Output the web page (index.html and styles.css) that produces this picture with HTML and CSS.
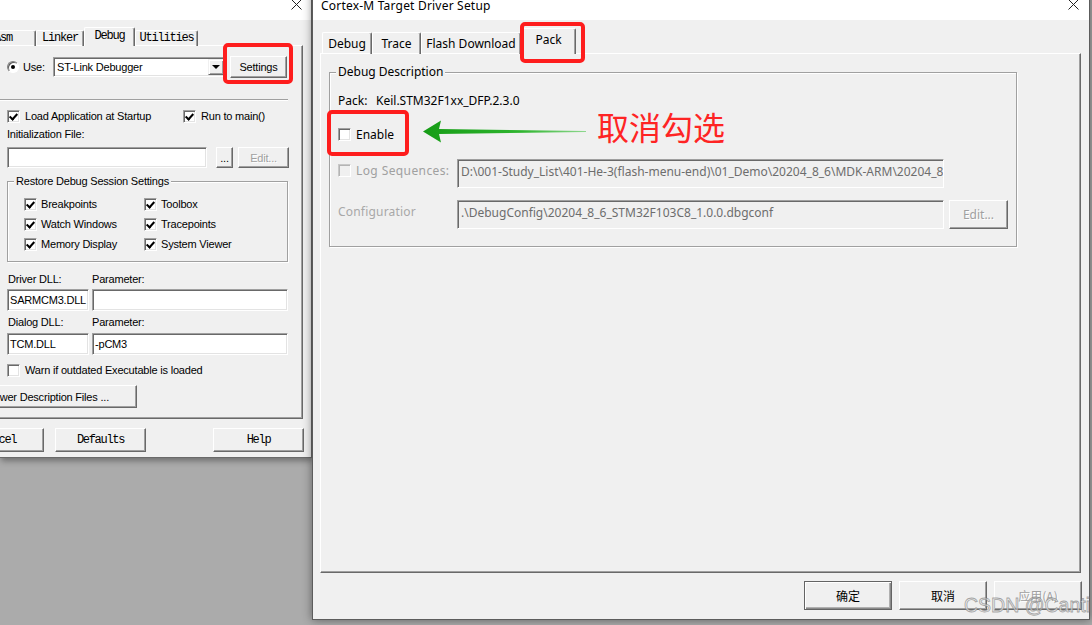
FILE: index.html
```html
<!DOCTYPE html>
<html lang="zh-CN">
<head>
<meta charset="utf-8">
<title>Cortex-M Target Driver Setup</title>
<link rel="stylesheet" href="styles.css">
</head>
<body>
<div class="desktop">

  <section class="win win-left">
    <header class="titlebar">
      <svg class="xicon" width="11" height="11" viewBox="0 0 11 11"><path d="M0.5 0.5L10.5 10.5M10.5 0.5L0.5 10.5" stroke="#222" stroke-width="1" fill="none"/></svg>
    </header>
    <div class="lbody">
      <nav class="ltabs">
        <span class="ltab lt-asm">Asm</span>
        <span class="ltab lt-linker">Linker</span>
        <span class="ltab lt-debug active">Debug</span>
        <span class="ltab lt-util">Utilities</span>
      </nav>
      <div class="lpanel">
        <div class="use-row">
          <span class="radio"></span>
          <span class="use-lbl">Use:</span>
          <div class="select">
            <span class="select-val">ST-Link Debugger</span>
            <span class="select-arrow"><i class="tri"></i></span>
          </div>
          <button class="btn settings-btn">Settings</button>
        </div>
        <div class="sep"></div>
        <div class="opt-row">
          <label class="chk"><span class="cb on"></span>Load Application at Startup</label>
          <label class="chk"><span class="cb on"></span>Run to main()</label>
        </div>
        <div class="lab init-lbl">Initialization File:</div>
        <div class="init-row">
          <span class="field init-field"></span>
          <button class="btn dots-btn">...</button>
          <button class="btn edit-btn disabled">Edit...</button>
        </div>
        <div class="group restore">
          <span class="legend">Restore Debug Session Settings</span>
          <div class="restore-grid">
            <label class="chk"><span class="cb on"></span>Breakpoints</label>
            <label class="chk"><span class="cb on"></span>Toolbox</label>
            <label class="chk"><span class="cb on"></span>Watch Windows</label>
            <label class="chk"><span class="cb on"></span>Tracepoints</label>
            <label class="chk"><span class="cb on"></span>Memory Display</label>
            <label class="chk"><span class="cb on"></span>System Viewer</label>
          </div>
        </div>
        <div class="dll-labels first"><span>Driver DLL:</span><span>Parameter:</span></div>
        <div class="dll-fields"><span class="field">SARMCM3.DLL</span><span class="field"></span></div>
        <div class="dll-labels"><span>Dialog DLL:</span><span>Parameter:</span></div>
        <div class="dll-fields"><span class="field">TCM.DLL</span><span class="field">-pCM3</span></div>
        <label class="chk warn-row"><span class="cb"></span>Warn if outdated Executable is loaded</label>
        <button class="btn manage-btn">Manage Component Viewer Description Files ...</button>
      </div>
      <div class="lbuttons">
        <button class="btn mono-btn cancel-btn">Cancel</button>
        <button class="btn mono-btn defaults-btn">Defaults</button>
        <button class="btn mono-btn help-btn">Help</button>
      </div>
    </div>
  </section>

  <section class="win win-right">
    <header class="titlebar rtitle">
      <span class="title-text">Cortex-M Target Driver Setup</span>
      <svg class="xicon" width="11" height="11" viewBox="0 0 11 11"><path d="M0.5 0.5L10.5 10.5M10.5 0.5L0.5 10.5" stroke="#222" stroke-width="1" fill="none"/></svg>
    </header>
    <div class="rbody">
      <nav class="rtabs">
        <span class="rtab rt-debug">Debug</span>
        <span class="rtab rt-trace">Trace</span>
        <span class="rtab rt-flash">Flash Download</span>
        <span class="rtab rt-pack active">Pack</span>
      </nav>
      <div class="rpanel">
        <div class="group rgroup">
          <span class="legend rlegend">Debug Description</span>
          <div class="pack-row"><span class="pack-key">Pack:</span><span>Keil.STM32F1xx_DFP.2.3.0</span></div>
          <label class="chk rchk enable-row"><span class="cb"></span>Enable</label>
          <div class="form-row log-row">
            <label class="chk rchk dis form-lbl"><span class="cb dis"></span>Log Sequences:</label>
            <span class="field rfield">D:\001-Study_List\401-He-3(flash-menu-end)\01_Demo\20204_8_6\MDK-ARM\20204_8_6</span>
          </div>
          <div class="form-row cfg-row">
            <span class="form-lbl dis-text">Configuratior</span>
            <span class="field rfield">.\DebugConfig\20204_8_6_STM32F103C8_1.0.0.dbgconf</span>
            <button class="btn redit-btn disabled">Edit...</button>
          </div>
        </div>
      </div>
      <div class="rbuttons">
        <button class="btn rbtn default">确定</button>
        <button class="btn rbtn">取消</button>
        <button class="btn rbtn disabled">应用(A)</button>
      </div>
    </div>
  </section>

  <div class="hl hl-settings"></div>
  <div class="hl hl-pack"></div>
  <div class="hl hl-enable"></div>
  <svg class="arrow" width="164" height="24" viewBox="0 0 164 24">
    <defs>
      <linearGradient id="ag" x1="0" y1="0" x2="1" y2="0">
        <stop offset="0" stop-color="#169c16"/>
        <stop offset="0.6" stop-color="#2fb52f"/>
        <stop offset="1" stop-color="#8fd88f"/>
      </linearGradient>
    </defs>
    <polygon points="0,11.5 18,0.5 16,9 163,11 163,12 16,14 18,22.5" fill="url(#ag)"/>
  </svg>
  <div class="note">取消勾选</div>
  <div class="watermark">CSDN @Canti</div>
</div>
</body>
</html>
```

FILE: styles.css
```css
* { box-sizing: border-box; }
html, body { margin: 0; padding: 0; }
body {
  width: 1092px;
  height: 625px;
  overflow: hidden;
  background: #ababab;
  font-family: "Liberation Sans", Arial, sans-serif;
}
.desktop { position: relative; width: 1092px; height: 625px; overflow: hidden; }

/* windows */
.win {
  position: absolute;
  top: -10px;
  background: #f0f0f0;
  display: flex;
  flex-direction: column;
  color: #000;
}
.win-left {
  left: 0;
  width: 312px;
  height: 468px;
  border-right: 1px solid #6a6a6a;
  border-bottom: 1px solid #6a6a6a;
  box-shadow: 1px 3px 6px rgba(0,0,0,0.35);
  font: 11px "Liberation Sans", Arial, sans-serif;
  letter-spacing: -0.2px;
}
.win-right {
  left: 312px;
  width: 778px;
  height: 630px;
  border: 1px solid #5c5c5c;
  border-top: none;
  box-shadow: 0 0 9px rgba(0,0,0,0.45);
  font: 12px "Noto Sans", "Noto Sans CJK SC", sans-serif;
  z-index: 2;
}
.titlebar {
  flex: none;
  height: 30px;
  background: #fff;
  display: flex;
  align-items: center;
  padding-top: 1px;
}
.titlebar .xicon { margin-left: auto; margin-right: 9px; margin-top: -2px; }
.rtitle .xicon { margin-right: 10px; }
.title-text { margin-left: 8px; font-size: 12px; color: #000; letter-spacing: 0.2px; }

button { font: inherit; letter-spacing: inherit; color: #000; padding: 0; }

/* classic 3D pieces */
.btn {
  background: #f0f0f0;
  border: 1px solid;
  border-color: #fff #696969 #696969 #fff;
  box-shadow: inset -1px -1px 0 #a0a0a0;
  display: flex;
  align-items: center;
  justify-content: center;
  white-space: nowrap;
}
.btn.disabled { color: #a0a0a0; text-shadow: 1px 1px 0 #fff; }
.field {
  background: #fff;
  border: 1px solid;
  border-color: #a0a0a0 #fff #fff #a0a0a0;
  box-shadow: inset 1px 1px 0 #696969, inset -1px -1px 0 #e3e3e3;
  display: flex;
  align-items: center;
  padding-left: 2px;
  white-space: nowrap;
  overflow: hidden;
}
.cb {
  position: relative;
  flex: none;
  width: 13px;
  height: 13px;
  background: #fff;
  border: 1px solid;
  border-color: #a0a0a0 #fff #fff #a0a0a0;
  box-shadow: inset 1px 1px 0 #696969, inset -1px -1px 0 #e3e3e3;
  margin-right: 5px;
}
.cb.on::after {
  content: "";
  position: absolute;
  left: 3px;
  top: 1px;
  width: 3px;
  height: 6px;
  border-right: 2px solid #000;
  border-bottom: 2px solid #000;
  transform: rotate(42deg);
}
.cb.dis { background: #f0f0f0; border-color: #c8c8c8 #fff #fff #c8c8c8; box-shadow: inset 1px 1px 0 #b4b4b4; }
.chk { display: flex; align-items: center; height: 14px; white-space: nowrap; }
.radio {
  position: relative;
  flex: none;
  width: 12px;
  height: 12px;
  border-radius: 50%;
  background: #fff;
  border: 1px solid;
  border-color: #808080 #fff #fff #808080;
  box-shadow: inset 1px 1px 0 #5a5a5a;
}
.radio::after {
  content: "";
  position: absolute;
  left: 3px;
  top: 3px;
  width: 4px;
  height: 4px;
  border-radius: 50%;
  background: #000;
}
.group {
  position: relative;
  border: 1px solid #a0a0a0;
  box-shadow: inset 1px 1px 0 #fff, 1px 1px 0 #fff;
}
.legend {
  position: absolute;
  top: -8px;
  left: 7px;
  padding: 0 2px;
  background: #f0f0f0;
  line-height: 14px;
  white-space: nowrap;
}

/* left window */
.lbody { flex: 1; display: flex; flex-direction: column; padding-top: 7px; }
.ltabs {
  display: flex;
  align-items: flex-end;
  height: 19px;
  margin-bottom: -1px;
  position: relative;
  z-index: 1;
  font: 12px "Liberation Mono", "Courier New", monospace;
  letter-spacing: -1.2px;
}
.ltab {
  height: 16px;
  border: 1px solid;
  border-color: #fff #696969 transparent #fff;
  border-bottom: none;
  border-radius: 2px 2px 0 0;
  box-shadow: inset -1px 0 0 #a0a0a0;
  display: flex;
  align-items: center;
  justify-content: center;
  padding-bottom: 1px;
}
.ltab.active { height: 19px; background: #f0f0f0; padding-bottom: 3px; }
.lt-asm { margin-left: -30px; width: 66px; }
.lt-linker { width: 48px; }
.lt-debug { width: 51px; }
.lt-util { width: 63px; }

.lpanel {
  flex: none;
  height: 374px;
  width: 307px;
  margin-left: -4px;
  border: 1px solid;
  border-color: #fff #696969 #696969 #fff;
  box-shadow: inset -1px -1px 0 #a0a0a0;
  padding: 10px 0 0 10px;
  display: flex;
  flex-direction: column;
}
.use-row { display: flex; align-items: center; height: 22px; }
.use-lbl { width: 34px; padding-left: 4px; }
.select {
  width: 173px;
  height: 20px;
  display: flex;
  align-items: center;
  background: #fff;
  border: 1px solid;
  border-color: #a0a0a0 #fff #fff #a0a0a0;
  box-shadow: inset 1px 1px 0 #696969, inset -1px -1px 0 #e3e3e3;
  padding: 0 1px 0 3px;
}
.select-val { flex: 1; white-space: nowrap; }
.select-arrow {
  width: 16px;
  height: 16px;
  background: #f0f0f0;
  border: 1px solid;
  border-color: #f0f0f0 #696969 #696969 #f0f0f0;
  box-shadow: inset 1px 1px 0 #fff, inset -1px -1px 0 #a0a0a0;
  display: flex;
  align-items: center;
  justify-content: center;
}
.tri {
  width: 0;
  height: 0;
  border-left: 4px solid transparent;
  border-right: 4px solid transparent;
  border-top: 4px solid #000;
}
.settings-btn { width: 57px; height: 22px; margin-left: 4px; }
.sep {
  margin-top: 21px;
  margin-left: -11px;
  width: 292px;
  height: 2px;
  border-top: 1px solid #a0a0a0;
  border-bottom: 1px solid #fff;
}
.opt-row { display: flex; margin-top: 8px; height: 14px; }
.opt-row .chk:first-child { width: 176px; }
.lab { height: 14px; line-height: 14px; }
.init-lbl { margin-top: 4px; }
.init-row { display: flex; margin-top: 6px; height: 21px; }
.init-field { width: 200px; }
.dots-btn { width: 17px; margin-left: 9px; }
.edit-btn { width: 51px; margin-left: 5px; }
.restore { margin-top: 13px; width: 281px; height: 81px; padding: 15px 0 0 16px; }
.restore .legend { top: -8px; left: 6px; }
.restore-grid { display: grid; grid-template-columns: 120px 120px; row-gap: 6px; }
.restore-grid .chk .cb { margin-right: 4px; }
.dll-labels { display: flex; height: 14px; line-height: 14px; margin-top: 4px; }
.dll-labels.first { margin-top: 10px; }
.dll-labels span:first-child { width: 85px; padding-left: 1px; }
.dll-fields { display: grid; grid-template-columns: 82px 196px; column-gap: 3px; height: 22px; margin-top: 3px; }
.dll-labels + .dll-fields { margin-top: 4px; }
.dll-labels.first + .dll-fields { margin-top: 3px; }
.warn-row { margin-top: 8px; }
.manage-btn {
  margin-top: 8px;
  margin-left: -140px;
  width: 270px;
  height: 23px;
  justify-content: flex-end;
  padding-right: 27px;
}
.lbuttons { display: flex; margin-top: 9px; height: 24px; }
.mono-btn {
  width: 91px;
  height: 24px;
  font: 12px "Liberation Mono", "Courier New", monospace;
  letter-spacing: -1.3px;
}
.cancel-btn { margin-left: -47px; }
.defaults-btn { margin-left: 11px; }
.help-btn { margin-left: 67px; }

/* right window */
.rbody { flex: 1; display: flex; flex-direction: column; padding: 8px 7px 0 7px; }
.rtabs {
  display: flex;
  align-items: flex-end;
  height: 26px;
  margin-bottom: -1px;
  position: relative;
  z-index: 1;
  padding-left: 2px;
}
.rtab {
  height: 22px;
  border: 1px solid;
  border-color: #fff #696969 transparent #fff;
  border-bottom: none;
  border-radius: 2px 2px 0 0;
  box-shadow: inset -1px 0 0 #a0a0a0;
  display: flex;
  align-items: center;
  justify-content: center;
  white-space: nowrap;
  padding-bottom: 1px;
}
.rtab.active { height: 26px; background: #f0f0f0; padding-bottom: 4px; }
.rt-debug { width: 50px; }
.rt-trace { width: 49px; }
.rt-flash { width: 100px; }
.rt-pack { width: 55px; }
.rpanel {
  flex: none;
  width: 761px;
  height: 520px;
  border: 1px solid;
  border-color: #fff #696969 #696969 #fff;
  box-shadow: inset -1px -1px 0 #a0a0a0;
  padding: 18px 0 0 8px;
}
.rgroup { width: 688px; height: 175px; padding: 21px 0 0 8px; }
.rlegend { top: -9px; left: 6px; line-height: 16px; }
.pack-row { height: 14px; line-height: 14px; display: flex; white-space: nowrap; }
.pack-key { width: 38px; }
.rchk { height: 14px; }
.enable-row { margin-top: 19px; }
.form-row { display: flex; align-items: flex-start; height: 29px; }
.log-row { margin-top: 18px; }
.cfg-row { margin-top: 12px; }
.form-lbl { width: 119px; flex: none; }
.log-row .form-lbl { margin-top: 4px; }
.cfg-row .form-lbl { margin-top: 4px; line-height: 16px; }
.chk.dis { color: #a0a0a0; letter-spacing: 0.4px; }
.dis-text { color: #a8a8a8; letter-spacing: 0.2px; }
.rfield {
  width: 487px;
  height: 29px;
  background: #f0f0f0;
  color: #6d6d6d;
  align-items: flex-start;
  padding: 4px 0 0 3px;
  line-height: 16px;
  border-color: #a0a0a0 #fff #fff #a0a0a0;
  box-shadow: inset 1px 1px 0 #696969;
}
.redit-btn { width: 59px; height: 29px; margin-left: 5px; }
.rbuttons { display: flex; justify-content: flex-end; gap: 7px; margin-top: 8px; height: 29px; }
.rbtn { width: 88px; height: 29px; font-family: "Noto Sans CJK SC", "Noto Sans", sans-serif; font-size: 12px; }
.rbtn.default { border: 1px solid #646464; box-shadow: inset 1px 1px 0 #fff, inset -1px -1px 0 #8a8a8a, inset -2px -2px 0 #b0b0b0; }

/* annotations */
.hl {
  position: absolute;
  border: 4px solid #fe1d1d;
  border-radius: 5px;
  z-index: 5;
}
.hl-settings { left: 223px; top: 43px; width: 70px; height: 41px; }
.hl-pack { left: 520px; top: 22px; width: 65px; height: 41px; }
.hl-enable { left: 327px; top: 110px; width: 82px; height: 46px; }
.arrow { position: absolute; left: 423px; top: 120px; z-index: 5; }
.note {
  position: absolute;
  left: 597px;
  top: 110px;
  z-index: 5;
  font: 32px/32px "Noto Sans CJK SC", sans-serif;
  color: #fe2424;
  white-space: nowrap;
}
.watermark {
  position: absolute;
  left: 964px;
  top: 594px;
  z-index: 6;
  font: 19.5px "Liberation Sans", Arial, sans-serif;
  color: rgba(235,235,235,0.75);
  -webkit-text-stroke: 0.8px rgba(110,110,110,0.6);
  white-space: nowrap;
}
```
